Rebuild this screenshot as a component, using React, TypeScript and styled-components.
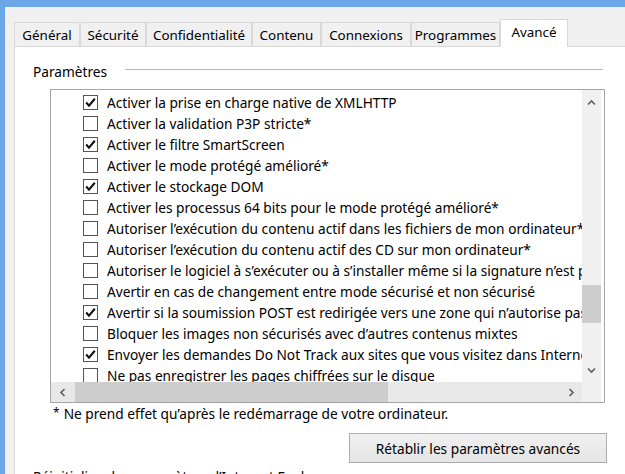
import React from "react";
import styled, { createGlobalStyle } from "styled-components";

const GlobalStyle = createGlobalStyle`
    html, body {
        margin: 0;
        padding: 0;
        overflow: hidden;
        background: #f0f0f0;
    }
    body {
        font-family: "Noto Sans", "DejaVu Sans", sans-serif;
        font-size: 13.7px;
        color: #000;
    }
`

const Frame = styled.div`
    box-sizing: border-box;
    width: 625px;
    height: 474px;
    overflow: hidden;
    border-top: 7px solid #6aa6e8;
    border-left: 5px solid #6aa6e8;
    background: #f0f0f0;
    display: flex;
    flex-direction: column;
    padding-left: 9px;
`

const TabStrip = styled.div`
    display: flex;
    align-items: flex-end;
    height: 28px;
    margin-top: 12px;
    margin-bottom: -1px;
    position: relative;
    z-index: 1;
`

const Tab = styled.div<{ $active?: boolean; $w: number }>`
    box-sizing: border-box;
    width: ${({ $w }) => $w}px;
    height: ${({ $active }) => ($active ? 28 : 24)}px;
    margin-bottom: ${({ $active }) => ($active ? 0 : 1)}px;
    padding-bottom: ${({ $active }) => ($active ? 3 : 0)}px;
    border: 1px solid #d9d9d9;
    border-bottom: none;
    background: ${({ $active }) => ($active ? "#fff" : "#f0f0f0")};
    font-size: 13.4px;
    display: flex;
    align-items: center;
    justify-content: center;
    white-space: nowrap;
`

const Panel = styled.div`
    flex: 1;
    background: #fff;
    border-top: 1px solid #d9d9d9;
    border-left: 1px solid #d9d9d9;
`

const Body = styled.div`
    width: 574px;
    padding-left: 18px;
    display: flex;
    flex-direction: column;
`

const GroupHeader = styled.div`
    display: flex;
    height: 18px;
    margin-top: 16px;
`

const GroupLabel = styled.span`
    line-height: 18px;
`

const GroupRule = styled.div`
    flex: 1;
    height: 1px;
    background: #b9b9b9;
    margin: 6px 4px 0 18px;
`

const ListBox = styled.div`
    box-sizing: border-box;
    width: 555px;
    height: 314px;
    margin: 8px 0 0 17px;
    border: 1px solid #a5a5a5;
    padding-right: 3px;
    background: #fff;
    display: grid;
    grid-template-columns: 1fr 19px;
    grid-template-rows: 1fr 20px;
`

const ListContent = styled.div`
    overflow: hidden;
    padding-top: 2px;
`

const Row = styled.div`
    height: 21px;
    display: flex;
    align-items: center;
    gap: 9px;
    padding-left: 32px;
    white-space: nowrap;
`

const CheckBox = styled.span`
    box-sizing: border-box;
    flex: none;
    width: 15px;
    height: 15px;
    border: 1px solid #555;
    background: #fff;
    display: flex;
    align-items: center;
    justify-content: center;
`

const VScroll = styled.div`
    background: #f0f0f0;
    display: flex;
    flex-direction: column;
`

const HScroll = styled.div`
    background: #e8e8e8;
    display: flex;
`

const ArrowButton = styled.div<{ $size: number }>`
    flex: none;
    width: ${({ $size }) => $size}px;
    height: ${({ $size }) => $size}px;
    display: flex;
    align-items: center;
    justify-content: center;
`

const VArrow = styled(ArrowButton)`
    width: 19px;
`

const HArrow = styled(ArrowButton)`
    height: 20px;
`

const VTrack = styled.div`
    flex: 1;
    padding-top: 171px;
`

const HTrack = styled.div`
    flex: 1;
    padding-left: 2px;
`

const Thumb = styled.div<{ $vertical?: boolean }>`
    background: #cdcdcd;
    ${({ $vertical }) => ($vertical ? "height: 38px;" : "width: 313px; height: 100%;")}
`

const Corner = styled.div`
    background: #f0f0f0;
`

const Footnote = styled.div`
    margin: 2px 0 0 20px;
    line-height: 18px;
`

const Star = styled.span`
    font-size: 12px;
    position: relative;
    top: -2px;
    margin-right: 4px;
`

const ResetButton = styled.div`
    box-sizing: border-box;
    align-self: flex-end;
    width: 258px;
    height: 30px;
    margin-top: 9px;
    border: 1px solid #acacac;
    background: linear-gradient(#f0f0f0, #e5e5e5);
    display: flex;
    align-items: center;
    justify-content: center;
`

const BottomLabel = styled.div`
    margin-top: 5px;
    line-height: 18px;
    white-space: nowrap;
`

const tabs = [
    { label: "Général", w: 66 },
    { label: "Sécurité", w: 66 },
    { label: "Confidentialité", w: 106 },
    { label: "Contenu", w: 69 },
    { label: "Connexions", w: 90 },
    { label: "Programmes", w: 89 },
    { label: "Avancé", w: 68, active: true },
]

const options = [
    { text: "Activer la prise en charge native de XMLHTTP", on: true },
    { text: "Activer la validation P3P stricte*", on: false },
    { text: "Activer le filtre SmartScreen", on: true },
    { text: "Activer le mode protégé amélioré*", on: false },
    { text: "Activer le stockage DOM", on: true },
    { text: "Activer les processus 64 bits pour le mode protégé amélioré*", on: false },
    { text: "Autoriser l’exécution du contenu actif dans les fichiers de mon ordinateur*", on: false },
    { text: "Autoriser l’exécution du contenu actif des CD sur mon ordinateur*", on: false },
    { text: "Autoriser le logiciel à s’exécuter ou à s’installer même si la signature n’est pas valide", on: false },
    { text: "Avertir en cas de changement entre mode sécurisé et non sécurisé", on: false },
    { text: "Avertir si la soumission POST est redirigée vers une zone qui n’autorise pas les envois", on: true },
    { text: "Bloquer les images non sécurisés avec d’autres contenus mixtes", on: false },
    { text: "Envoyer les demandes Do Not Track aux sites que vous visitez dans Internet Explorer", on: true },
    { text: "Ne pas enregistrer les pages chiffrées sur le disque", on: false },
]

const Chevron = ({ dir }: { dir: "up" | "down" | "left" | "right" }) => {
    const rot = { up: 0, right: 90, down: 180, left: 270 }[dir]
    return (
        <svg width="9" height="9" viewBox="0 0 9 9" style={{ transform: `rotate(${rot}deg)` }}>
            <polyline points="1,6.5 4.5,3 8,6.5" fill="none" stroke="#606060" strokeWidth="1.7" />
        </svg>
    )
}

const Check = () => (
    <svg width="13" height="13" viewBox="0 0 13 13">
        <polyline points="2.2,6.5 5,9.6 10.8,2.8" fill="none" stroke="#111" strokeWidth="2.1" />
    </svg>
)

export default function App() {
    return (
        <Frame>
            <GlobalStyle />
            <TabStrip>
                {tabs.map((t) => (
                    <Tab key={t.label} $w={t.w} $active={t.active}>{t.label}</Tab>
                ))}
            </TabStrip>
            <Panel>
                <Body>
                    <GroupHeader>
                        <GroupLabel>Paramètres</GroupLabel>
                        <GroupRule />
                    </GroupHeader>
                    <ListBox>
                        <ListContent>
                            {options.map((o) => (
                                <Row key={o.text}>
                                    <CheckBox>{o.on && <Check />}</CheckBox>
                                    <span>{o.text}</span>
                                </Row>
                            ))}
                        </ListContent>
                        <VScroll>
                            <VArrow $size={24}><Chevron dir="up" /></VArrow>
                            <VTrack><Thumb $vertical /></VTrack>
                            <VArrow $size={24}><Chevron dir="down" /></VArrow>
                        </VScroll>
                        <HScroll>
                            <HArrow $size={22}><Chevron dir="left" /></HArrow>
                            <HTrack><Thumb /></HTrack>
                            <HArrow $size={22}><Chevron dir="right" /></HArrow>
                        </HScroll>
                        <Corner />
                    </ListBox>
                    <Footnote><Star>*</Star>Ne prend effet qu’après le redémarrage de votre ordinateur.</Footnote>
                    <ResetButton>Rétablir les paramètres avancés</ResetButton>
                    <BottomLabel>Réinitialiser les paramètres d’Internet Explorer</BottomLabel>
                </Body>
            </Panel>
        </Frame>
    )
}
